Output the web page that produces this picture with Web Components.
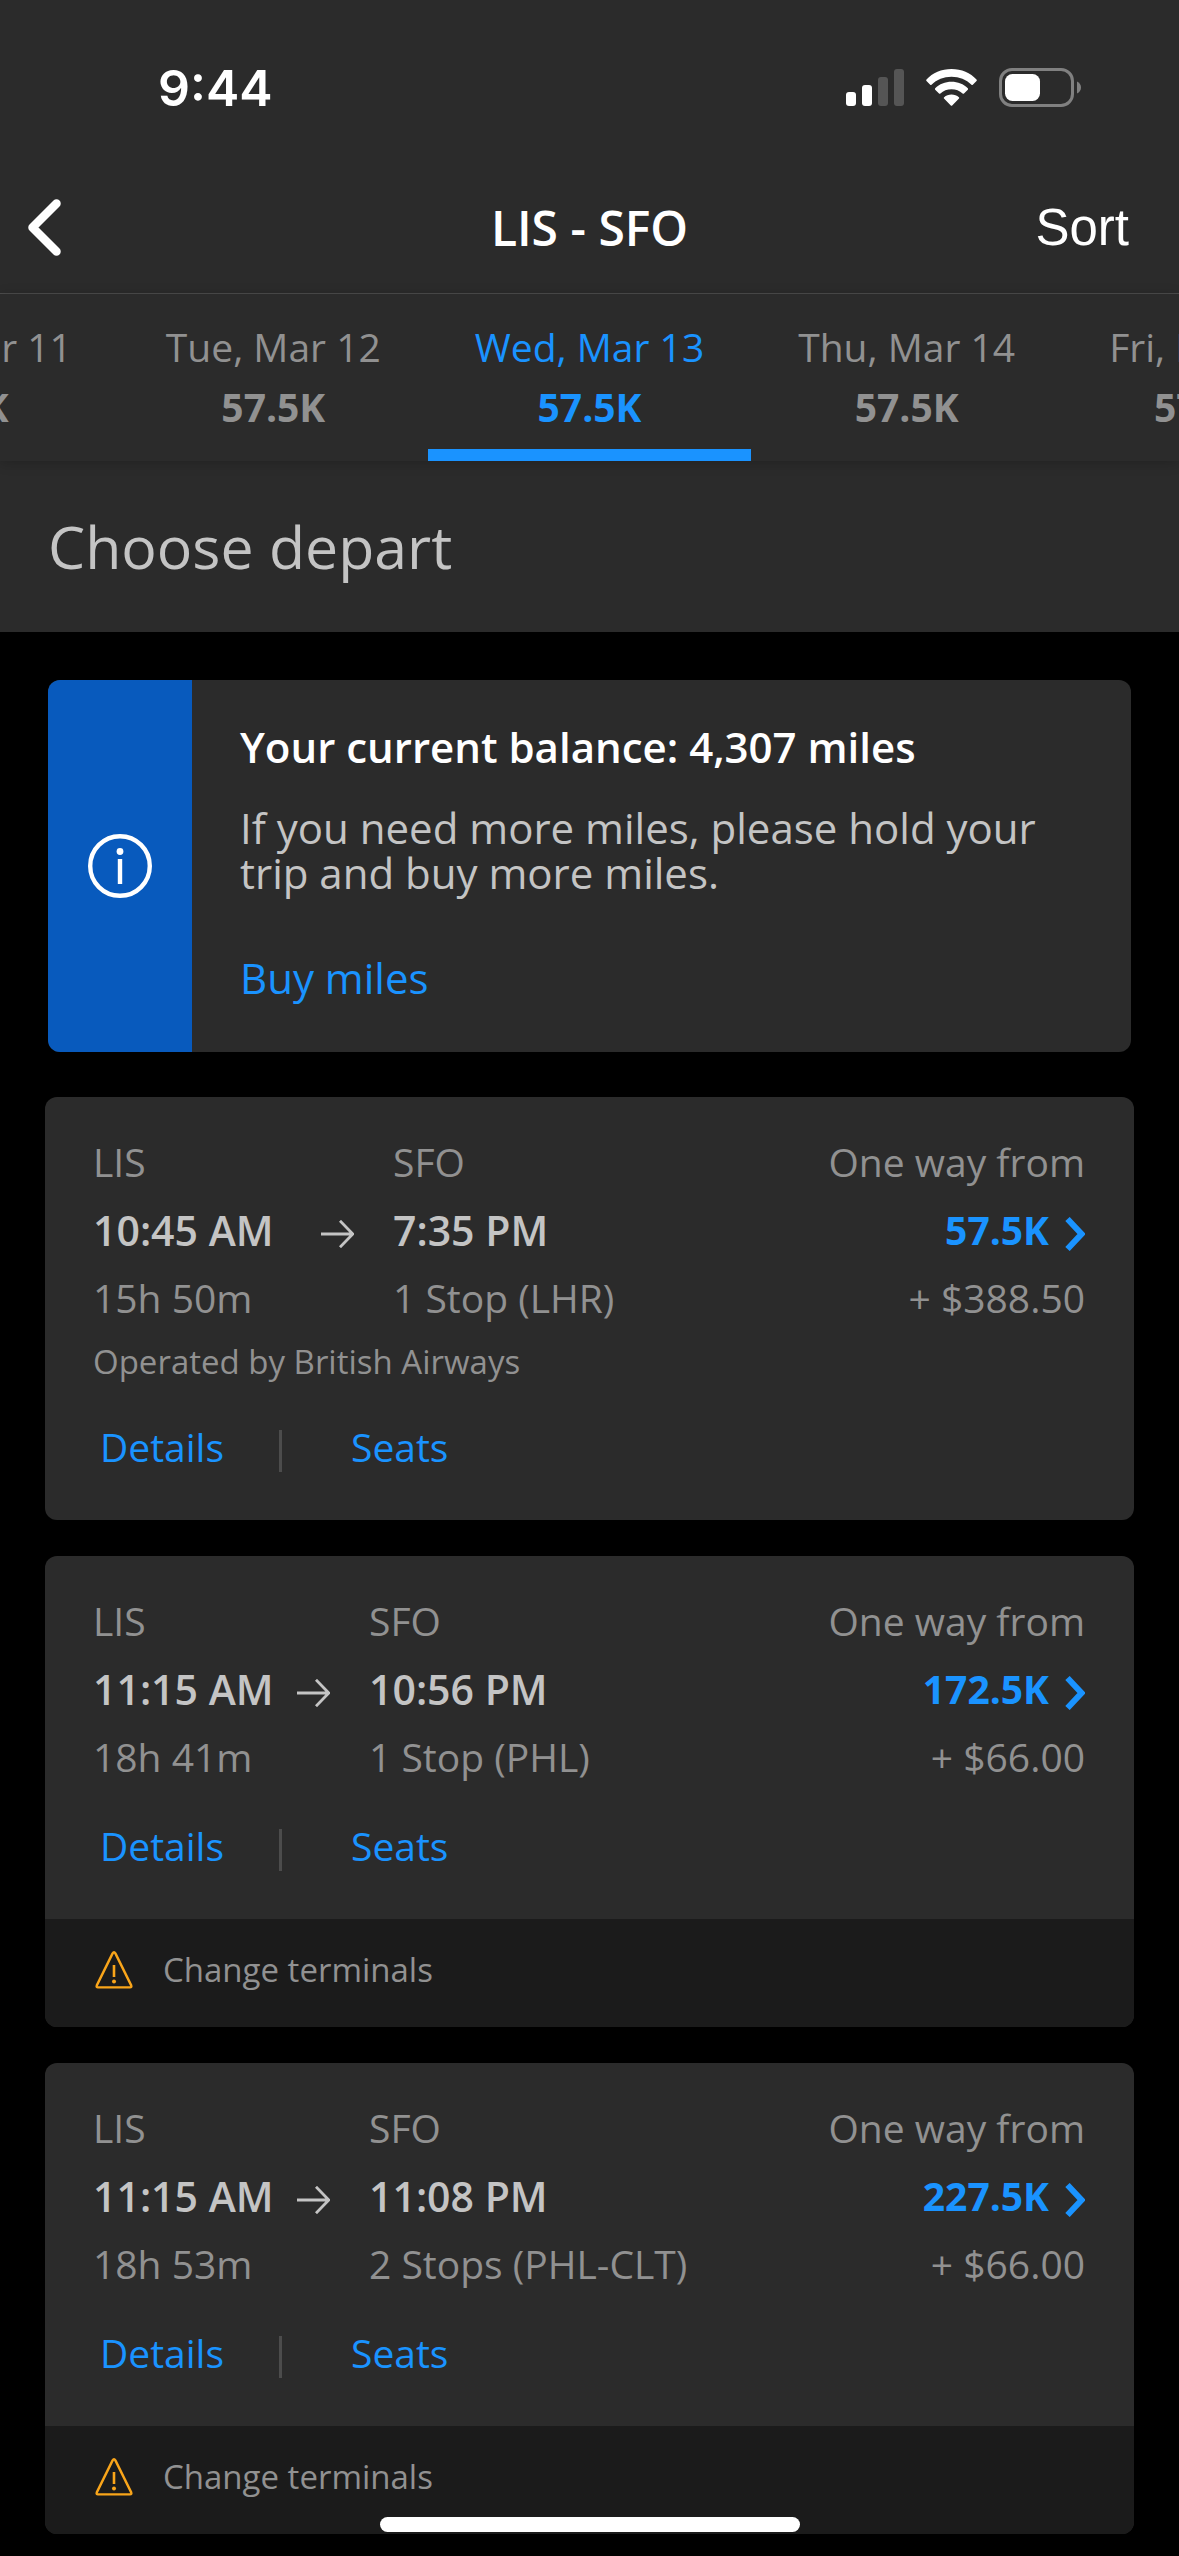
<!DOCTYPE html>
<html lang="en">
<head>
<meta charset="utf-8">
<meta name="viewport" content="width=device-width, initial-scale=1">
<title>LIS - SFO</title>
<style>
  :root {
    --surface: #2b2b2b;
    --strip: #1b1b1b;
    --line: #4c4c4c;
    --muted: #919191;
    --text: #c4c4c4;
    --accent: #1a93ff;
    --panel: #085abd;
    --size-small: 33px;
    --size-body: 39px;
    --size-strong: 42px;
  }
  body {
    margin: 0;
    background: #000;
    color: var(--muted);
    font-family: "Open Sans", "Noto Sans", sans-serif;
    font-size: var(--size-body);
  }
  main { padding: 48px 45px 22px; }
  .flights { display: flex; flex-direction: column; gap: 36px; margin-top: 45px; }
</style>
</head>
<body>
<status-bar time="9:44"></status-bar>
<nav-bar>LIS - SFO</nav-bar>
<date-tabs></date-tabs>
<page-heading>Choose depart</page-heading>
<main>
  <miles-notice>
    <span slot="title">Your current balance: 4,307 miles</span>
    If you need more miles, please hold your trip and buy more miles.
    <span slot="action">Buy miles</span>
  </miles-notice>
  <div class="flights">
    <flight-card wide from="LIS" to="SFO" depart="10:45 AM" arrive="7:35 PM" duration="15h 50m" stops="1 Stop (LHR)" price="57.5K" fee="+ $388.50">
      <span slot="operator">Operated by British Airways</span>
    </flight-card>
    <flight-card from="LIS" to="SFO" depart="11:15 AM" arrive="10:56 PM" duration="18h 41m" stops="1 Stop (PHL)" price="172.5K" fee="+ $66.00">
      <card-alert slot="alert">Change terminals</card-alert>
    </flight-card>
    <flight-card from="LIS" to="SFO" depart="11:15 AM" arrive="11:08 PM" duration="18h 53m" stops="2 Stops (PHL-CLT)" price="227.5K" fee="+ $66.00">
      <card-alert slot="alert">Change terminals</card-alert>
    </flight-card>
  </div>
</main>
<home-indicator></home-indicator>

<script>
const reset = `
  *, *::before { box-sizing: border-box; }
  svg { display: block; flex: none; }
  button { font: inherit; color: inherit; background: none; border: 0; padding: 0; margin: 0; }
  a { color: var(--accent); text-decoration: none; }
`;

function define(name, render) {
  customElements.define(name, class extends HTMLElement {
    constructor() {
      super();
      this.attachShadow({ mode: "open" });
    }
    connectedCallback() {
      this.shadowRoot.innerHTML = `<style>${reset}</style>` + render(this);
    }
  });
}

define("status-bar", el => `
  <style>
    :host { display: flex; align-items: center; justify-content: space-between; height: 160px;
      box-sizing: border-box; padding: 15px 98px 0 158px; background: var(--surface); color: #fff; }
    .time { font: 600 50px/60px Inter, sans-serif; }
    .icons { display: flex; align-items: center; gap: 22px; }
  </style>
  <span class="time">${el.getAttribute("time")}</span>
  <div class="icons">
    <svg width="58" height="37" viewBox="0 0 58 37" fill="#fff">
      <rect y="23" width="10" height="14" rx="3"/>
      <rect x="16" y="16" width="10" height="21" rx="3"/>
      <rect x="32" y="8" width="10" height="29" rx="3" fill="#555"/>
      <rect x="48" width="10" height="37" rx="3" fill="#555"/>
    </svg>
    <svg width="51" height="37" viewBox="0 0 51 37" fill="#fff">
      <path d="M25.500 0C35.500 0 44.500 4 50.500 10.500C51 11 51 11.500 50.500 12L46.800 15.700C46.400 16.100 45.900 16.100 45.500 15.700C40.300 10.600 33.200 7.700 25.500 7.700C17.800 7.700 10.700 10.600 5.500 15.700C5.100 16.100 4.600 16.100 4.200 15.700L.5 12C0 11.500 0 11 .5 10.500C6.500 4 15.500 0 25.500 0Z"/>
      <path d="M25.500 12.800C31.800 12.800 37.600 15.200 41.800 19.200C42.300 19.700 42.300 20.200 41.800 20.700L38 24.500C37.600 24.900 37.100 24.900 36.600 24.500C33.700 21.800 29.800 20.300 25.500 20.300C21.200 20.300 17.300 21.800 14.400 24.500C13.900 24.900 13.400 24.900 13 24.500L9.200 20.700C8.700 20.200 8.700 19.700 9.200 19.200C13.400 15.200 19.200 12.800 25.500 12.800Z"/>
      <path d="M25.500 25.500C28.300 25.500 30.900 26.500 32.900 28.200C33.400 28.600 33.400 29.100 33 29.600L26.200 36.400C25.800 36.800 25.200 36.800 24.800 36.400L18 29.600C17.600 29.100 17.600 28.600 18.100 28.200C20.100 26.500 22.700 25.500 25.500 25.500Z"/>
    </svg>
    <svg width="82" height="39" viewBox="0 0 82 39">
      <rect x="1.500" y="1.500" width="72" height="36" rx="11.500" fill="none" stroke="#808080" stroke-width="3"/>
      <rect x="6" y="6" width="35" height="27" rx="7.500" fill="#fff"/>
      <path d="M78 13.500C80.500 14.600 82 16.900 82 19.500S80.500 24.400 78 25.500Z" fill="#808080"/>
    </svg>
  </div>
`);

define("nav-bar", () => `
  <style>
    :host { display: grid; grid-template-columns: 1fr auto 1fr; align-items: center; height: 134px;
      box-sizing: border-box; padding: 2px 50px 0 28px; background: var(--surface); color: #fff; border-bottom: 1px solid var(--line); }
    .back { justify-self: start; }
    h1 { margin: 0; padding-left: 22px; font-size: 48px; line-height: 60px; font-weight: 600; }
    .sort { justify-self: end; font: 400 51px/60px "Liberation Sans", Arial, sans-serif; }
  </style>
  <button class="back" aria-label="Back">
    <svg width="33" height="57" viewBox="0 0 33 57"><path d="M28.500 4.500L4.500 28.500L28.500 52.500" fill="none" stroke="#fff" stroke-width="8.500" stroke-linecap="round" stroke-linejoin="round"/></svg>
  </button>
  <h1><slot></slot></h1>
  <button class="sort">Sort</button>
`);

define("date-tab", el => `
  <style>
    :host { display: block; flex: none; }
    button { display: block; padding: 23px 47px 12px; border-bottom: 12px solid transparent; text-align: center; font-size: var(--size-body); line-height: 60px; white-space: nowrap; }
    b { display: block; font-weight: 700; }
    :host([selected]) button { color: var(--accent); border-color: var(--accent); }
  </style>
  <button role="tab" aria-selected="${el.hasAttribute("selected")}"><slot></slot><b>57.5K</b></button>
`);

define("date-tabs", () => `
  <style>
    :host { display: grid; grid-template-columns: minmax(0, 1fr) auto minmax(0, 1fr); background: var(--surface);
      position: relative; overflow-x: clip; box-shadow: 0 2px 12px rgba(0, 0, 0, .2); }
    div { display: flex; }
    .before { justify-content: flex-end; }
  </style>
  <div class="before"><date-tab>Mon, Mar 11</date-tab><date-tab>Tue, Mar 12</date-tab></div>
  <date-tab selected>Wed, Mar 13</date-tab>
  <div><date-tab>Thu, Mar 14</date-tab><date-tab>Fri, Mar 15</date-tab></div>
`);

define("page-heading", () => `
  <style>
    :host { display: block; padding: 45px 48px 46px; background: var(--surface); color: var(--text); }
    h2 { margin: 0; font-size: 59px; line-height: 80px; font-weight: 400; }
  </style>
  <h2><slot></slot></h2>
`);

define("miles-notice", () => `
  <style>
    :host { display: grid; grid-template-columns: 144px 1fr; margin: 0 3px; border-radius: 12px; overflow: hidden;
      background: var(--surface); color: var(--text); font-size: var(--size-strong); line-height: 45px; }
    .mark { display: grid; place-items: center; background: var(--panel); }
    .copy { padding: 44px 45px 52px 48px; }
    h3 { margin: 0 0 36px; font-size: inherit; font-weight: 600; color: #fff; }
    p { margin: 0 0 60px; }
    a { display: block; width: fit-content; }
  </style>
  <div class="mark">
    <svg width="64" height="64" viewBox="0 0 64 64">
      <circle cx="32" cy="32" r="29.800" fill="none" stroke="#fff" stroke-width="4.400"/>
      <circle cx="32" cy="17.500" r="3.400" fill="#fff"/>
      <rect x="29.800" y="25" width="4.400" height="25" fill="#fff"/>
    </svg>
  </div>
  <div class="copy">
    <h3><slot name="title"></slot></h3>
    <p><slot></slot></p>
    <a href="#buy"><slot name="action"></slot></a>
  </div>
`);

define("card-alert", () => `
  <style>
    :host { display: flex; align-items: center; gap: 30px; height: 108px; box-sizing: border-box; padding: 0 50px 6px;
      background: var(--strip); font-size: var(--size-small); line-height: 50px; }
  </style>
  <svg width="38" height="38" viewBox="0 0 38 38">
    <path d="M17.600 2.400Q19 .2 20.400 2.400L36.200 34.400Q36.900 36.400 35 36.400H3Q1.100 36.400 1.800 34.400Z" fill="none" stroke="#f9a51a" stroke-width="2.400" stroke-linejoin="round"/>
    <path d="M19 14V26" stroke="#f9a51a" stroke-width="2.600"/>
    <circle cx="19" cy="30.500" r="2" fill="#f9a51a"/>
  </svg>
  <span><slot></slot></span>
`);

define("flight-card", el => {
  const v = name => el.getAttribute(name);
  const operated = el.querySelector('[slot="operator"]') ? '<span class="operator"><slot name="operator"></slot></span>' : "";
  return `
  <style>
    :host { display: block; border-radius: 12px; overflow: hidden; background: var(--surface); --depart: 204px; }
    :host([wide]) { --depart: 228px; }
    .body { padding: 31px 49px 48px 48px; }
    .trip { display: grid; grid-template-columns: var(--depart) 72px 1fr auto; align-items: center; line-height: 68px; white-space: nowrap; }
    .trip svg { margin-top: 8px; }
    .trip .right { grid-column: 4; text-align: right; }
    .arrive { grid-column: 3; }
    .time { font-size: 41px; font-weight: 600; color: var(--text); }
    .price { display: flex; align-items: center; justify-content: flex-end; gap: 16px; font-weight: 700; }
    .operator { display: block; font-size: var(--size-small); line-height: 60px; }
    .links { display: flex; padding: 29px 7px 0; line-height: 51px; }
    .links a:first-child { min-width: 179px; }
    .rule { align-self: flex-end; width: 3px; height: 42px; margin-right: 69px; background: var(--line); }
  </style>
  <div class="body">
    <div class="trip">
      <span>${v("from")}</span>
      <span class="arrive">${v("to")}</span>
      <span class="right">One way from</span>
      <span class="time">${v("depart")}</span>
      <svg width="33" height="28" viewBox="0 0 33 28"><path d="M0 14H31.500M19 .8L31.800 14L19 27.200" fill="none" stroke="#c4c4c4" stroke-width="2.800"/></svg>
      <span class="arrive time">${v("arrive")}</span>
      <a class="right price" href="#book">${v("price")}<svg width="20" height="34" viewBox="0 0 20 34"><path d="M2.500 2L16.500 17L2.500 32" fill="none" stroke="#1a93ff" stroke-width="6"/></svg></a>
      <span>${v("duration")}</span>
      <span class="arrive">${v("stops")}</span>
      <span class="right">${v("fee")}</span>
    </div>
    ${operated}
    <div class="links"><a href="#details">Details</a><span class="rule"></span><a href="#seats">Seats</a></div>
  </div>
  <slot name="alert"></slot>`;
});

define("home-indicator", () => `
  <style>
    :host { position: fixed; inset: auto 0 24px; display: flex; justify-content: center; pointer-events: none; }
    div { width: 420px; height: 15px; border-radius: 8px; background: #fff; }
  </style>
  <div></div>
`);
</script>
</body>
</html>
